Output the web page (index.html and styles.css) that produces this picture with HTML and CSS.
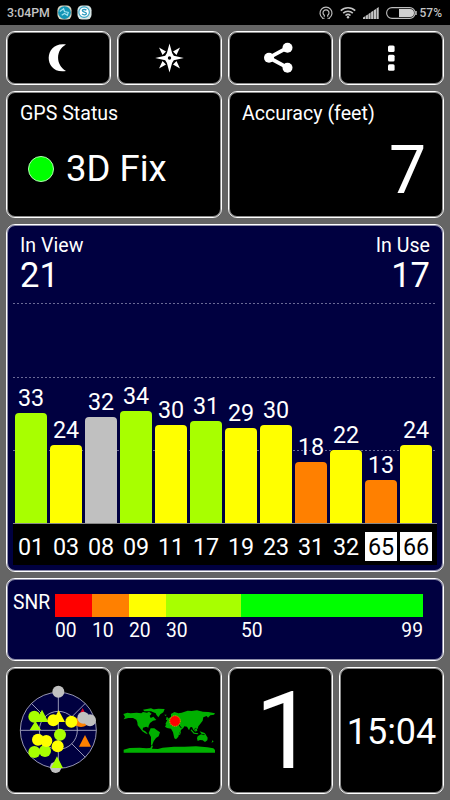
FILE: index.html
```
<!DOCTYPE html>
<html lang="en">

<head>
    <meta charset="UTF-8">
    <meta name="viewport" content="width=device-width, initial-scale=1.0">
    <title>GPS Test</title>
    <link rel="stylesheet" href="styles.css">
</head>

<body>
    <header class="status-bar">
        <span class="clock">3:04PM</span>
        <svg class="app-icon" viewBox="0 0 16 16">
            <rect x=".5" y=".5" width="15" height="15" rx="5" fill="#d9d6c4" />
            <circle cx="8" cy="8" r="6.8" fill="#1295b5" />
            <path d="M3 7l4-3 1 3 4 1-1 3-3-2-3 2" fill="none" stroke="#9fe0ee" stroke-width="1.3" />
        </svg>
        <svg class="app-icon" viewBox="0 0 16 16">
            <rect x=".5" y=".5" width="15" height="15" rx="5" fill="#d8e6e6" />
            <circle cx="7.6" cy="7.6" r="5.6" fill="#fff" stroke="#35a6c8" stroke-width="1.2" />
            <path d="M10 5.6C9 4.4 5.6 4.5 5.7 6.2c.1 1.7 4.3 1 4.3 2.8 0 1.8-3.4 1.9-4.6.5" fill="none" stroke="#2898bd" stroke-width="1.4" />
        </svg>
        <div class="signals">
            <svg width="14" height="14" viewBox="0 0 14 14" fill="none" stroke="#bdbdbd">
                <path d="M3.6 12a6 6 0 1 1 6.8 0M5.3 10.8v-1.5a3 3 0 1 1 3.4 0v1.5" stroke-width="1.2" />
                <path d="M3 12.3h2.5M8.5 12.3H11" stroke-width="1" />
            </svg>
            <svg width="16" height="13" viewBox="0 0 16 13" fill="none" stroke="#c4c4c4" stroke-width="1.6">
                <path d="M.8 4.6a10.4 10.4 0 0 1 14.4 0M3.2 7.2a7 7 0 0 1 9.6 0M5.5 9.5a3.7 3.7 0 0 1 5 0" />
                <circle cx="8" cy="11.3" r="1.2" fill="#c4c4c4" stroke="none" />
            </svg>
            <svg width="16" height="12" viewBox="0 0 16 12" fill="#c4c4c4">
                <path d="M0 12V10.5L2.2 9.2V12zM2.7 12V8.7L4.9 7.4V12zM5.4 12V6.9L7.6 5.6V12zM8.1 12V5.1L10.3 3.8V12zM10.8 12V3.3L13 2V12zM13.5 12V1.5L15.7 0V12z" />
            </svg>
            <svg width="31" height="12" viewBox="0 0 31 12">
                <rect x=".6" y=".6" width="28.5" height="10.8" rx="5.4" fill="none" stroke="#bdbdbd" stroke-width="1.1" />
                <path d="M13 2h11a4 4 0 0 1 0 8H13z" fill="#d0d0d0" />
                <path d="M30 4v4" stroke="#bdbdbd" stroke-width="1.5" />
            </svg>
            <span class="battery">57%</span>
        </div>
    </header>

    <main class="screen">
        <div class="row buttons">
            <button class="panel">
                <svg viewBox="0 0 103 52">
                    <path d="M59 12.5C36 9 36 43 59 39 48.5 33 48.5 18 59 12.5z" fill="#fff" />
                </svg>
            </button>
            <button class="panel">
                <svg viewBox="0 0 103 52" fill="#fff">
                    <path d="M51.5 11.500l2.600 9.500 1.700 2.700 10 2.300-10 2.300-1.700 2.700-2.600 9.500-2.600-9.500-1.700-2.700-10-2.300 10-2.300 1.700-2.700z" />
                    <path d="M41 15.500l7 4-3.500 3.500zM62 15.500l-7 4 3.500 3.500zM41 36.500l7-4-3.500-3.500zM62 36.500l-7-4 3.500-3.500z" />
                    <circle cx="51.5" cy="26" r="1.7" fill="#000" />
                </svg>
            </button>
            <button class="panel">
                <svg viewBox="0 0 103 52" fill="#fff">
                    <path d="M58.5 15.7L40 25.700l18.500 10" fill="none" stroke="#fff" stroke-width="3.8" />
                    <circle cx="40" cy="25.7" r="5" />
                    <circle cx="58.5" cy="15.7" r="5" />
                    <circle cx="58.5" cy="35.7" r="5" />
                </svg>
            </button>
            <button class="panel">
                <svg viewBox="0 0 103 52" fill="#fff">
                    <rect x="48" y="13.5" width="6.6" height="6.6" rx="1.5" />
                    <rect x="48" y="22.8" width="6.6" height="6.6" rx="1.5" />
                    <rect x="48" y="32.2" width="6.6" height="6.6" rx="1.5" />
                </svg>
            </button>
        </div>

        <div class="row readouts">
            <section class="panel fix">
                <div class="title">GPS Status</div>
                <div class="fix-value"><i class="dot"></i>3D Fix</div>
            </section>
            <section class="panel accuracy">
                <div class="title">Accuracy (feet)</div>
                <div class="accuracy-value">7</div>
            </section>
        </div>

        <section class="panel chart">
            <div class="counts">
                <div>
                    <div class="title">In View</div>
                    <div class="count">21</div>
                </div>
                <div class="in-use">
                    <div class="title">In Use</div>
                    <div class="count">17</div>
                </div>
            </div>
            <div class="plot">
                <svg class="grid" viewBox="0 0 424 148">
                    <path d="M0 .5H424M0 74.5H424M0 147.5H424" />
                </svg>
                <div class="sat"><span>33</span><div class="bar lime" style="height: 110px"></div></div>
                <div class="sat"><span>24</span><div class="bar yellow" style="height: 78px"></div></div>
                <div class="sat"><span>32</span><div class="bar gray" style="height: 106px"></div></div>
                <div class="sat"><span>34</span><div class="bar lime" style="height: 112px"></div></div>
                <div class="sat"><span>30</span><div class="bar yellow" style="height: 98px"></div></div>
                <div class="sat"><span>31</span><div class="bar lime" style="height: 102px"></div></div>
                <div class="sat"><span>29</span><div class="bar yellow" style="height: 95px"></div></div>
                <div class="sat"><span>30</span><div class="bar yellow" style="height: 98px"></div></div>
                <div class="sat"><span>18</span><div class="bar orange" style="height: 61px"></div></div>
                <div class="sat"><span>22</span><div class="bar yellow" style="height: 73px"></div></div>
                <div class="sat"><span>13</span><div class="bar orange" style="height: 43px"></div></div>
                <div class="sat"><span>24</span><div class="bar yellow" style="height: 78px"></div></div>
            </div>
            <div class="ids">
                <span>01</span><span>03</span><span>08</span><span>09</span><span>11</span><span>17</span>
                <span>19</span><span>23</span><span>31</span><span>32</span><span class="glonass">65</span><span class="glonass">66</span>
            </div>
        </section>

        <section class="panel snr">
            <span class="snr-name">SNR</span>
            <div class="scale">
                <div class="step s10"><div class="swatch red"></div>00</div>
                <div class="step s10"><div class="swatch orange"></div>10</div>
                <div class="step s10"><div class="swatch yellow"></div>20</div>
                <div class="step s20"><div class="swatch lime"></div>30</div>
                <div class="step s50"><div class="swatch green"></div><div class="ends"><span>50</span><span>99</span></div></div>
            </div>
        </section>

        <div class="row tiles">
            <section class="panel">
                <!-- sky view -->
                <svg viewBox="6 9 309 375">
                    <g fill="#000040" stroke="#b4b4cc" stroke-width="2.5">
                        <circle cx="160" cy="196" r="114" />
                        <circle cx="160" cy="196" r="57" />
                        <path d="M46 196H274M160 82V310M79 115l41 41M241 115l-41 41M200 236l41 41M120 236l-41 41" />
                    </g>
                    <g fill="#c0c0c0">
                        <circle cx="160" cy="80" r="18" />
                        <circle cx="152" cy="307" r="17" />
                    </g>
                    <path d="M233 129l15 31h-30z" fill="#e00020" />
                    <path d="M210 160h36v20q-18 12-36 0z" fill="#ff8000" />
                    <path d="M240 210l18 35h-36z" fill="#ff8000" />
                    <g fill="#c0c0c0">
                        <circle cx="235" cy="158" r="18" />
                        <circle cx="255" cy="166" r="18" />
                    </g>
                    <g fill="#a8ff00">
                        <circle cx="88" cy="155" r="18" />
                        <path d="M111 134l19 37H92zM91 168l17 27H74z" />
                        <circle cx="165" cy="209" r="18" />
                        <circle cx="88" cy="261" r="18" />
                        <circle cx="120" cy="258" r="18" />
                        <path d="M156 274l18 35h-36z" />
                    </g>
                    <g fill="#ff0">
                        <circle cx="145" cy="166" r="18" />
                        <path d="M161 136l19 35h-38z" />
                        <circle cx="199" cy="170" r="18" />
                        <circle cx="99" cy="224" r="18" />
                        <circle cx="124" cy="228" r="18" />
                        <circle cx="158" cy="244" r="18" />
                    </g>
                </svg>
            </section>
            <section class="panel">
                <!-- world map -->
                <svg viewBox="9 9 309 375">
                    <g fill="#00b000">
                        <path d="M25 147l12-4 10 2 18-2 14 2 5-4 12 2 6-3 8 6-6 6 3 7 8-4 9 10-10 2-9 7-4 8-1 6-6-3-10 3-1 7 7 3 6 6 2 4-7-3-9-6-7-9-7-9-1-9-3-8-10-5-14 0-14 4 4-7z" />
                        <path d="M84 134l24-4 12 5 10 7-8 3-14-6-20 0zM108 134l22-3 19 1-4 10-9 6-6 9-6-8-4-10z" />
                        <path d="M107 190l11 0 8 6 9 6-4 12-8 5-7 10-4 10 0 5-4-4 0-24-7-12z" />
                        <path d="M154 178l9-6 14 0 12 6 8 10 5 2-9 13-3 12-7 8-5-3-4-18-6-11-12-2-6-4z" />
                        <path d="M155 169l4-8 9-6 0-8 10-6 12 4 10-2 18-6 12 1 16-2 18 4 16 1 20 4-3 4-11 2-7 7-4-5-10 4-2 10-8 11-5 6-2 8-5-4-5 4 3 8-6-6-4-8-5 1-4 9-6-11-8-1-5 8-10-12-16-4-10-1-9 5-7-2z" />
                        <path d="M148 149l7 0-3 4zM155 155l5 4-3 7-4-2zM195 198l3 2-3 10-3-1zM229 193l9 10 12 2-2 3-12-2-9-10zM240 192l5-3 2 8-6 3zM254 199l15 5 4 5-14-3z" />
                        <path d="M248 214l10-6 6 1 3 2 4-4 7 11-1 8-7 5-7-5-8-1-7 3-2-8zM292 226l4 3-6 5z" />
                        <path d="M26 263v-9l18-5 30-1 20 2 12-1 3-6 5 0-3 8 18 1 14-4 34-3 32 0 34-1 34 3 18 3 5 5v8z" />
                    </g>
                    <circle cx="180" cy="168" r="16" fill="#f00" stroke="#e09000" stroke-width="3" stroke-dasharray="4 2" />
                </svg>
            </section>
            <section class="panel number">1</section>
            <section class="panel time">15:04</section>
        </div>
    </main>
</body>

</html>
```
FILE: styles.css
```
* {
    margin: 0;
    padding: 0;
    box-sizing: border-box;
}

body {
    width: 450px;
    height: 800px;
    overflow: hidden;
    background: #656565;
    color: #fff;
    font-family: Roboto, sans-serif;
}

.status-bar {
    display: flex;
    align-items: center;
    height: 25px;
    padding: 0 8px 0 7px;
    background: #000;
    color: #c4c4c4;
    font-size: 12px;
    font-weight: 500;
}

.clock {
    width: 50px;
    font-size: 12.3px;
}

.app-icon {
    width: 15px;
    height: 15px;
    margin-right: 5px;
}

.signals {
    display: flex;
    align-items: center;
    gap: 7px;
    margin-left: auto;
}

.battery {
    margin-left: -4px;
}

.screen {
    display: flex;
    flex-direction: column;
    gap: 6px;
    padding: 6px;
}

.row {
    display: flex;
    gap: 6px;
}

.panel {
    flex: 1;
    border: 1px solid #fff;
    border-radius: 9px;
    background: #000;
    box-shadow: inset 0 0 0 1px rgba(255, 255, 255, .55);
    color: #fff;
    font-family: inherit;
}

.panel > svg {
    display: block;
    width: 100%;
    height: 100%;
}

.buttons {
    height: 54px;
}

.readouts {
    height: 127px;
}

.title {
    font-size: 19.6px;
    line-height: 26px;
}

.fix,
.accuracy {
    padding: 9px 13px;
}

.fix-value {
    display: flex;
    align-items: center;
    padding: 20px 0 0 8px;
    font-size: 36.5px;
    line-height: 44px;
}

.dot {
    width: 26px;
    height: 26px;
    margin-right: 12px;
    border: 1px solid #b0ffb0;
    border-radius: 50%;
    background: #0f0;
}

.accuracy-value {
    padding: 14px 4px 0 0;
    text-align: right;
    font-size: 66px;
    line-height: 60px;
}

.chart {
    flex: none;
    height: 348px;
    padding: 8px 6px 0;
    background: #000040;
}

.counts {
    display: flex;
    justify-content: space-between;
    height: 70px;
    padding: 0 7px;
}

.in-use {
    text-align: right;
}

.count {
    font-size: 34.5px;
    line-height: 32px;
}

.plot {
    position: relative;
    display: flex;
    align-items: flex-end;
    gap: 3px;
    height: 220px;
    padding-left: 2px;
}

.grid {
    position: absolute;
    left: 0;
    top: 0;
    width: 424px;
    height: 148px;
    fill: none;
    stroke: #6a6a96;
    stroke-dasharray: 2 2;
}

.sat {
    position: relative;
    width: 32px;
    font-size: 23.3px;
    line-height: 29px;
    text-align: center;
}

.bar {
    border-radius: 4px 4px 0 0;
}

.red {
    background: #f00;
}

.orange {
    background: #ff8000;
}

.yellow {
    background: #ff0;
}

.lime {
    background: #a8ff00;
}

.green {
    background: #0f0;
}

.gray {
    background: #c0c0c0;
}

.ids {
    display: flex;
    gap: 3px;
    width: 424px;
    height: 42px;
    padding: 8px 2px 4px;
    border-top: 1px solid #888;
    background: #000;
    font-size: 23.3px;
    line-height: 30px;
    text-align: center;
}

.ids span {
    width: 32px;
}

.ids .glonass {
    height: 29px;
    background: #fff;
    color: #000;
}

.snr {
    display: flex;
    flex: none;
    height: 83px;
    padding: 15px 20px 0 6px;
    background: #000040;
    font-size: 19.3px;
}

.snr-name {
    width: 42px;
    line-height: 17px;
}

.scale {
    display: flex;
    width: 368px;
}

.step {
    line-height: 27px;
}

.swatch {
    height: 23px;
}

.s10 {
    width: 37px;
}

.s20 {
    width: 75px;
}

.s50 {
    width: 182px;
}

.ends {
    display: flex;
    justify-content: space-between;
}

.tiles {
    height: 127px;
}

.number,
.time {
    display: flex;
    align-items: center;
    justify-content: center;
}

.number {
    font-size: 108px;
    text-indent: 9px;
}

.time {
    padding-top: 2px;
    font-size: 36px;
}
```
